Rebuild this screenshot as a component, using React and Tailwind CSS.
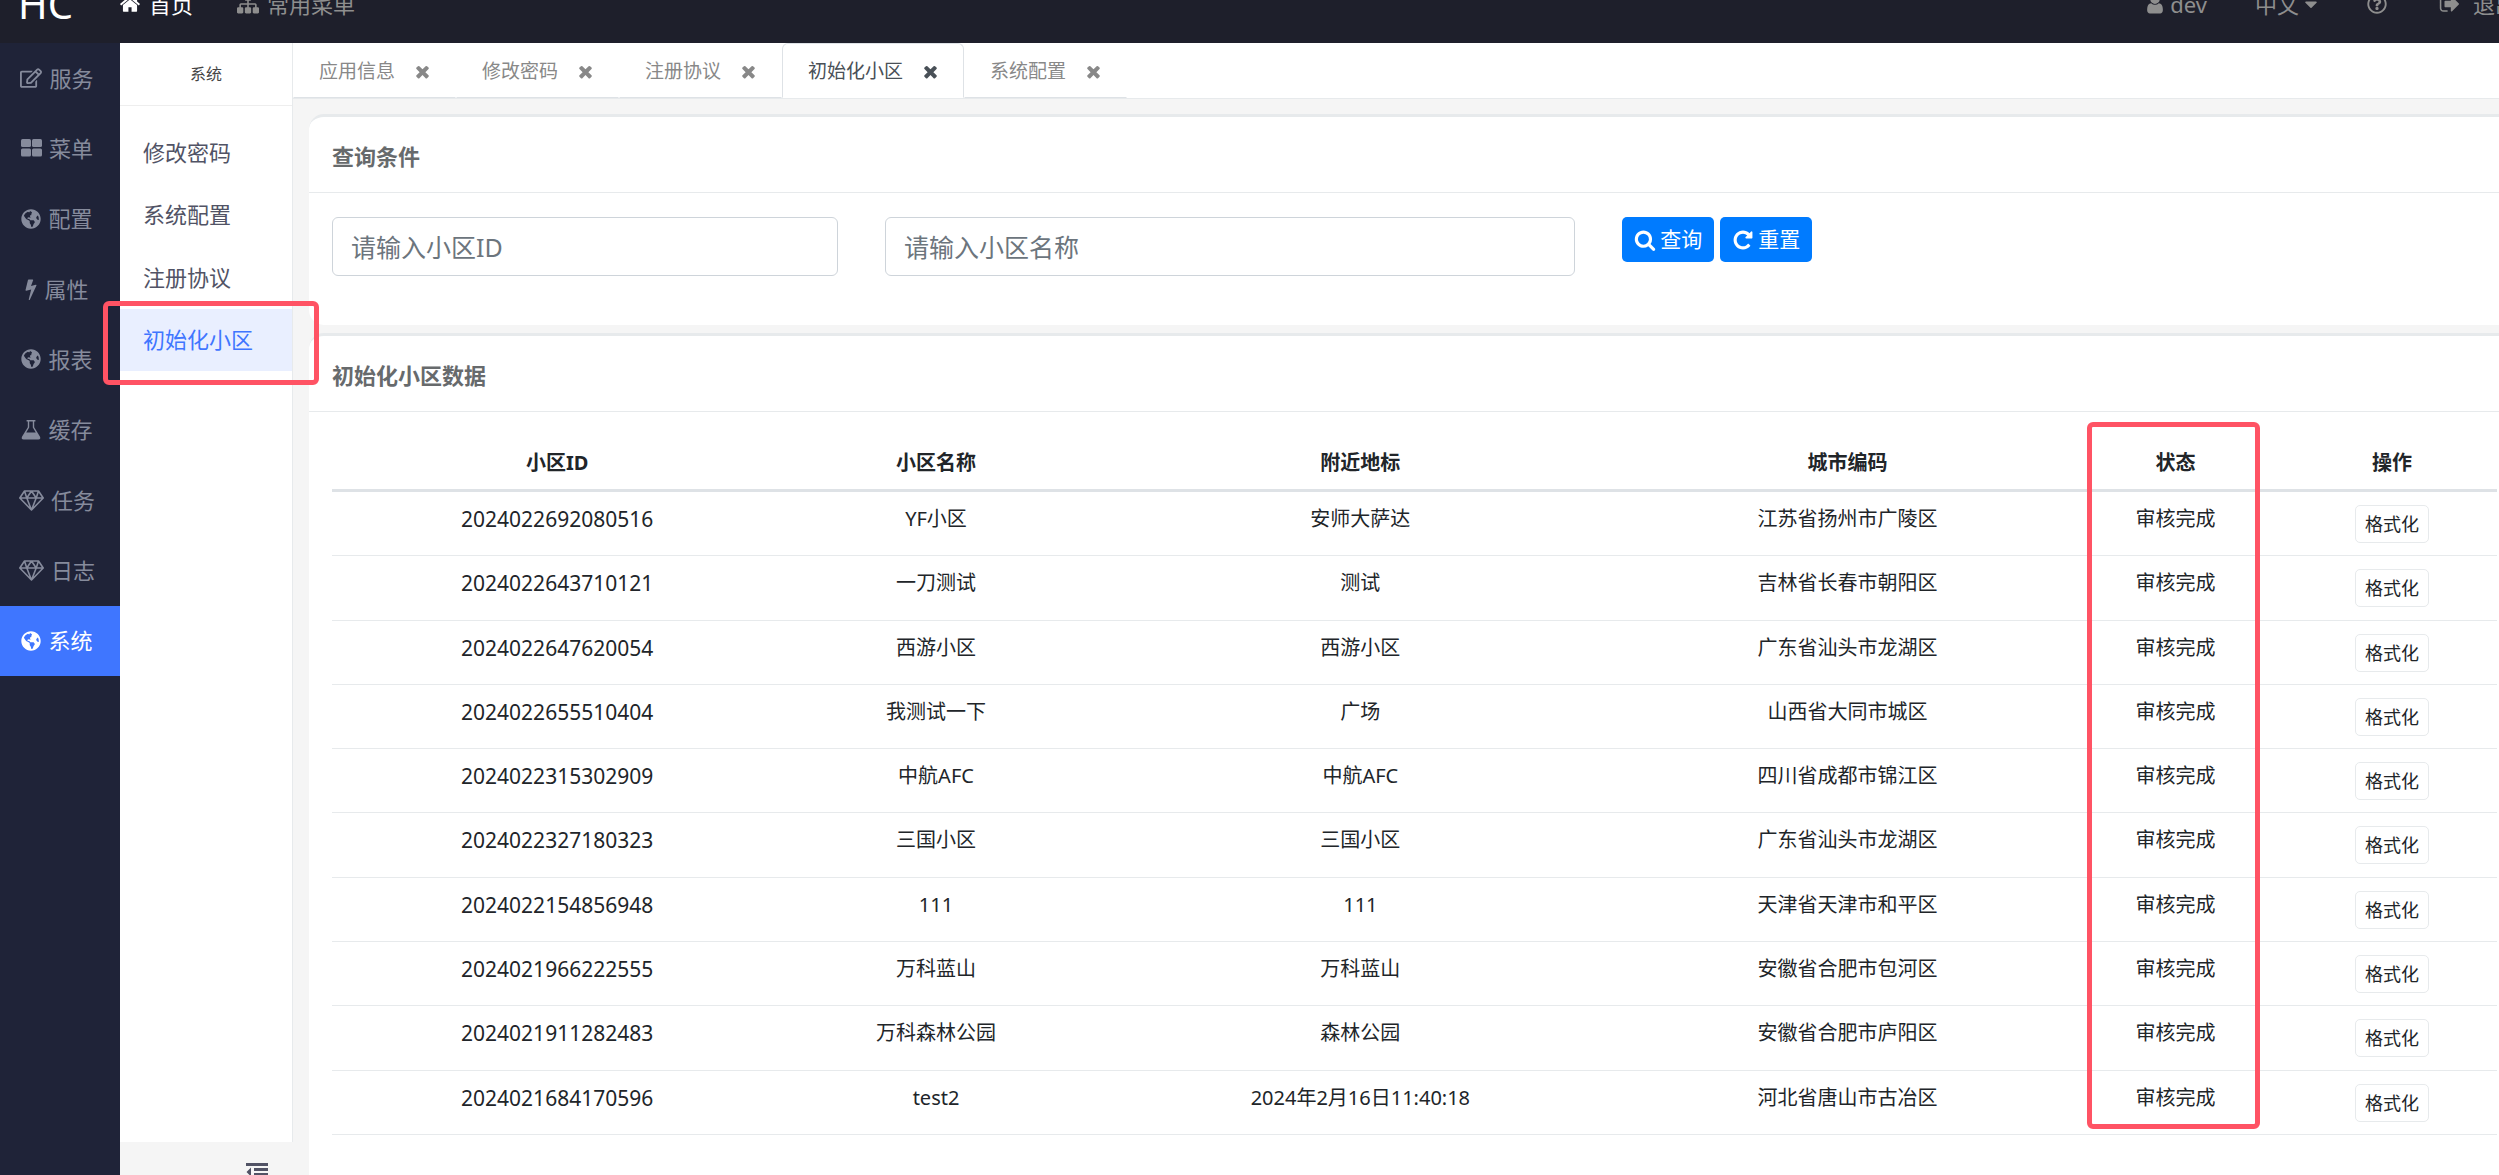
import React, { useState } from 'react';
import { FaRegEdit, FaGlobeAmericas, FaRegQuestionCircle, FaCaretDown } from 'react-icons/fa';

// Solid glyphs drawn on a 1792 unit em square
const glyphs = {
     home: 'M1472 992v480q0 26-19 45t-45 19h-384v-384h-256v384h-384q-26 0-45-19t-19-45v-480q0-1 .5-3t.5-3l575-474 575 474q1 2 1 6zm223-69l-62 74q-8 9-21 11h-3q-13 0-21-7l-692-577-692 577q-12 8-24 7-13-2-21-11l-62-74q-8-10-7-23.5t11-21.5l719-599q32-26 76-26t76 26l244 204v-195q0-14 9-23t23-9h192q14 0 23 9t9 23v408l219 182q10 8 11 21.5t-7 23.5z',
     sitemap: 'M1792 1248v320q0 40-28 68t-68 28h-320q-40 0-68-28t-28-68v-320q0-40 28-68t68-28h96v-192h-512v192h96q40 0 68 28t28 68v320q0 40-28 68t-68 28h-320q-40 0-68-28t-28-68v-320q0-40 28-68t68-28h96v-192h-512v192h96q40 0 68 28t28 68v320q0 40-28 68t-68 28h-320q-40 0-68-28t-28-68v-320q0-40 28-68t68-28h96v-192q0-52 38-90t90-38h512v-192h-96q-40 0-68-28t-28-68v-320q0-40 28-68t68-28h320q40 0 68 28t28 68v320q0 40-28 68t-68 28h-96v192h512q52 0 90 38t38 90v192h96q40 0 68 28t28 68z',
     user: 'M1536 1399q0 109-62.5 187t-150.5 78h-854q-88 0-150.5-78t-62.5-187q0-85 8.5-160.5t31.5-152 58.5-131 94-89 134.5-34.5q131 128 313 128t313-128q76 0 134.5 34.5t94 89 58.5 131 31.5 152 8.5 160.5zm-256-887q0 159-112.5 271.5t-271.5 112.5-271.5-112.5-112.5-271.5 112.5-271.5 271.5-112.5 271.5 112.5 112.5 271.5z',
     signOut: 'M704 1440q0 4 1 20t.5 26.5-3 23.5-10 19.5-20.5 6.5h-320q-119 0-203.5-84.5t-84.5-203.5v-704q0-119 84.5-203.5t203.5-84.5h320q13 0 22.5 9.5t9.5 22.5q0 4 1 20t.5 26.5-3 23.5-10 19.5-20.5 6.5h-320q-66 0-113 47t-47 113v704q0 66 47 113t113 47h312l11.5 1 11.5 3 8 5.5 7 9 2 13.5zm928-544q0 26-19 45l-544 544q-19 19-45 19t-45-19-19-45v-288h-448q-26 0-45-19t-19-45v-384q0-26 19-45t45-19h448v-288q0-26 19-45t45-19 45 19l544 544q19 19 19 45z',
     times: 'M1490 1322q0 40-28 68l-136 136q-28 28-68 28t-68-28l-294-294-294 294q-28 28-68 28t-68-28l-136-136q-28-28-28-68t28-68l294-294-294-294q-28-28-28-68t28-68l136-136q28-28 68-28t68 28l294 294 294-294q28-28 68-28t68 28l136 136q28 28 28 68t-28 68l-294 294 294 294q28 28 28 68z',
     search: 'M1216 832q0-185-131.5-316.5t-316.5-131.5-316.5 131.5-131.5 316.5 131.5 316.5 316.5 131.5 316.5-131.5 131.5-316.5zm512 832q0 52-38 90t-90 38q-54 0-90-38l-343-342q-179 124-399 124-143 0-273.5-55.5t-225-150-150-225-55.5-273.5 55.5-273.5 150-225 225-150 273.5-55.5 273.5 55.5 225 150 150 225 55.5 273.5q0 220-124 399l343 343q37 37 37 90z',
     repeat: 'M1664 256v448q0 26-19 45t-45 19h-448q-42 0-59-40-17-39 14-69l138-138q-148-137-349-137-104 0-198.5 40.5t-163.5 109.5-109.5 163.5-40.5 198.5 40.5 198.5 109.5 163.5 163.5 109.5 198.5 40.5q119 0 225-52t179-147q7-10 23-12 15 0 25 9l137 138q9 8 9.5 20.5t-7.5 22.5q-109 132-264 204.5t-327 72.5q-156 0-298-61t-245-164-164-245-61-298 61-298 164-245 245-164 298-61q147 0 284.5 55.5t244.5 156.5l130-129q29-31 70-14 39 17 39 59z',
     bolt: 'M1333 566q18 20 7 44l-540 1157q-13 25-42 25-4 0-14-2-17-5-25.5-19t-4.5-30l197-808-406 101q-4 1-12 1-18 0-31-11-18-15-13-39l201-825q4-16 18-26.5t32-10.5h328q19 0 32 12.5t13 29.5q0 8-5 18l-171 463 396-98q8-2 12-2 19 0 34 15z'
};

const Glyph = ({ name, className }) => (
     <svg viewBox="0 0 1792 1792" fill="currentColor" className={className} aria-hidden="true">
          <path d={glyphs[name]} />
     </svg>
);

const ThLarge = () => (
     <svg viewBox="0 0 21 18" fill="currentColor" className="w-[21px] h-[18px]" aria-hidden="true">
          <rect x="0" y="0" width="10" height="8" rx="1.5" />
          <rect x="11" y="0" width="10" height="8" rx="1.5" />
          <rect x="0" y="9.5" width="10" height="8" rx="1.5" />
          <rect x="11" y="9.5" width="10" height="8" rx="1.5" />
     </svg>
);

const Flask = () => (
     <svg viewBox="0 0 20 20" fill="currentColor" className="w-5 h-5" aria-hidden="true">
          <path d="M5.6 0h8.8v1.4h-1.2v5.8l5.7 9.2c.9 1.6.3 3.1-1.5 3.1H2.6c-1.8 0-2.4-1.5-1.5-3.1l5.7-9.2V1.4H5.6zM8.200 1.400v6.200L5.200 12.500h9.600L11.800 7.600V1.400z" fillRule="evenodd" />
     </svg>
);

const Diamond = () => (
     <svg viewBox="0 0 25 21" fill="none" stroke="currentColor" strokeWidth="1.6" strokeLinejoin="round" className="w-[25px] h-[21px]" aria-hidden="true">
          <path d="M5.5 1h14l4.700 7L12.500 20 .8 8zM.8 8h23.400M12.500 1L7.800 8l4.700 12 4.700-12zM5.500 1l2.300 7M19.500 1l-2.300 7" />
     </svg>
);

const Outdent = () => (
     <svg viewBox="0 0 22 18" fill="currentColor" className="w-[22px] h-[18px]" aria-hidden="true">
          <path d="M0 0h22v3H0zM8 5h14v3H8zM8 10h14v3H8zM0 15h22v3H0zM5 4.500v9L.5 9z" />
     </svg>
);

const sideMenus = [
     { name: '服务', icon: <FaRegEdit className="w-[22px] h-5" /> },
     { name: '菜单', icon: <ThLarge /> },
     { name: '配置', icon: <FaGlobeAmericas className="w-5 h-5" /> },
     { name: '属性', icon: <Glyph name="bolt" className="w-[22px] h-[22px] -mx-[5px]" /> },
     { name: '报表', icon: <FaGlobeAmericas className="w-5 h-5" /> },
     { name: '缓存', icon: <Flask /> },
     { name: '任务', icon: <Diamond /> },
     { name: '日志', icon: <Diamond /> },
     { name: '系统', icon: <FaGlobeAmericas className="w-5 h-5" /> }
];

const subMenus = ['修改密码', '系统配置', '注册协议', '初始化小区'];

const tabs = ['应用信息', '修改密码', '注册协议', '初始化小区', '系统配置'];

const communities = [
     { id: '2024022692080516', name: 'YF小区', landmark: '安师大萨达', city: '江苏省扬州市广陵区' },
     { id: '2024022643710121', name: '一刀测试', landmark: '测试', city: '吉林省长春市朝阳区' },
     { id: '2024022647620054', name: '西游小区', landmark: '西游小区', city: '广东省汕头市龙湖区' },
     { id: '2024022655510404', name: '我测试一下', landmark: '广场', city: '山西省大同市城区' },
     { id: '2024022315302909', name: '中航AFC', landmark: '中航AFC', city: '四川省成都市锦江区' },
     { id: '2024022327180323', name: '三国小区', landmark: '三国小区', city: '广东省汕头市龙湖区' },
     { id: '2024022154856948', name: '111', landmark: '111', city: '天津省天津市和平区' },
     { id: '2024021966222555', name: '万科蓝山', landmark: '万科蓝山', city: '安徽省合肥市包河区' },
     { id: '2024021911282483', name: '万科森林公园', landmark: '森林公园', city: '安徽省合肥市庐阳区' },
     { id: '2024021684170596', name: 'test2', landmark: '2024年2月16日11:40:18', city: '河北省唐山市古冶区' }
];

const Header = () => (
     <header className="flex items-center shrink-0 h-[78px] -mt-[35px] pl-[18px] bg-[#1e1f2b] text-[22px] text-[#8e8e8e] whitespace-nowrap">
          <div className="w-[101px] text-[40px] text-white">HC</div>
          <nav className="flex items-center gap-12">
               <a href="#" className="flex items-center gap-2 text-white">
                    <Glyph name="home" className="w-[22px] h-[22px]" />
                    首页
               </a>
               <a href="#" className="flex items-center gap-2 -ml-1">
                    <Glyph name="sitemap" className="w-[22px] h-[22px]" />
                    常用菜单
               </a>
          </nav>
          <nav className="flex items-center gap-12 ml-auto -mr-[18px]">
               <a href="#" className="flex items-center gap-1">
                    <Glyph name="user" className="w-[22px] h-[22px]" />
                    dev
               </a>
               <a href="#" className="flex items-center gap-1">
                    中文
                    <FaCaretDown className="w-4 h-5" />
               </a>
               <a href="#" aria-label="帮助">
                    <FaRegQuestionCircle className="w-5 h-5" />
               </a>
               <a href="#" className="flex items-center gap-3 pl-1">
                    <Glyph name="signOut" className="w-[22px] h-[22px]" />
                    退出
               </a>
          </nav>
     </header>
);

const Card = ({ title, className, children }) => (
     <section className={`rounded-t-[15px] border-t-[3px] border-[#e7eaec] bg-white ${className}`}>
          <div className="flex items-center h-[76px] pt-[3px] px-[23px] border-b border-[#e7eaec]">
               <h5 className="text-[22px] font-bold text-[#676a6c]">{title}</h5>
          </div>
          {children}
     </section>
);

const App = () => {
     const [currentMenu, setCurrentMenu] = useState('系统');
     const [currentSub, setCurrentSub] = useState('初始化小区');
     const [currentTab, setCurrentTab] = useState('初始化小区');
     const [communityId, setCommunityId] = useState('');
     const [communityName, setCommunityName] = useState('');

     const resetConditions = () => {
          setCommunityId('');
          setCommunityName('');
     };

     return (
          <div className="relative flex flex-col h-screen overflow-hidden bg-[#f5f5f5] font-['Noto_Sans','Noto_Sans_CJK_SC',sans-serif] text-[#212529]">
               <Header />
               <div className="flex flex-1 min-h-0">
                    <aside className="w-[120px] shrink-0 bg-[#1f2338]">
                         <ul className="grid grid-rows-9 h-[633px]">
                              {sideMenus.map((menu) => (
                                   <li key={menu.name}>
                                        <button
                                             onClick={() => setCurrentMenu(menu.name)}
                                             className={`flex items-center justify-center gap-[7px] w-full h-full pr-[6px] text-[22px] ${menu.name === currentMenu ? 'bg-[#3f76ff] text-white' : 'text-[#868b9c]'}`}
                                        >
                                             {menu.icon}
                                             {menu.name}
                                        </button>
                                   </li>
                              ))}
                         </ul>
                    </aside>

                    <aside className="flex flex-col w-[173px] shrink-0">
                         <div className="flex flex-col flex-1 bg-white border-r border-[#e7eaec]">
                              <div className="flex items-center justify-center h-[63px] border-b border-[#eeeeee] text-base text-[#444444]">系统</div>
                              <ul className="grid grid-rows-4 h-[250px] mt-[15px]">
                                   {subMenus.map((name) => (
                                        <li key={name}>
                                             <button
                                                  onClick={() => setCurrentSub(name)}
                                                  className={`w-full h-full pl-[23px] text-left text-[22px] ${name === currentSub ? 'bg-[#e9efff] text-[#3f76ff]' : 'text-[#515365]'}`}
                                             >
                                                  {name}
                                             </button>
                                        </li>
                                   ))}
                              </ul>
                         </div>
                         <button aria-label="收起" className="flex justify-end h-[33px] pt-[21px] pr-[25px] overflow-hidden text-[#515365]">
                              <Outdent />
                         </button>
                    </aside>

                    <main className="flex flex-col flex-1 min-w-0">
                         <ul className="flex shrink-0 h-14 bg-white border-b border-[#e7eaec]">
                              {tabs.map((tab) => (
                                   <li
                                        key={tab}
                                        className={`flex items-center gap-5 h-[55px] pt-[2px] px-[25px] border text-[19px] ${tab === currentTab ? 'rounded-t-md border-[#dee2e6] border-b-white text-[#495057]' : 'border-transparent border-b-[#dee2e6] text-[#888888]'}`}
                                   >
                                        <a href="#" onClick={() => setCurrentTab(tab)}>{tab}</a>
                                        <button aria-label="关闭" className="flex justify-center w-[15px]">
                                             <Glyph name="times" className="w-[19px] h-[19px] shrink-0" />
                                        </button>
                                   </li>
                              ))}
                         </ul>

                         <div className="flex flex-col flex-1 gap-2 pt-[15px] pl-4 -mr-[21px]">
                              <Card title="查询条件" className="shrink-0 rounded-b-[15px]">
                                   <div className="grid grid-cols-12 items-start gap-x-[47px] px-[23px] pt-6 pb-[49px]">
                                        <input
                                             type="text"
                                             value={communityId}
                                             onChange={(e) => setCommunityId(e.target.value)}
                                             aria-label="小区ID"
                                             placeholder="请输入小区ID"
                                             className="col-span-3 h-[59px] px-[18px] border border-[#ced4da] rounded-md text-[25px] placeholder:text-[#6c757d]"
                                        />
                                        <input
                                             type="text"
                                             value={communityName}
                                             onChange={(e) => setCommunityName(e.target.value)}
                                             aria-label="小区名称"
                                             placeholder="请输入小区名称"
                                             className="col-span-4 h-[59px] px-[18px] border border-[#ced4da] rounded-md text-[25px] placeholder:text-[#6c757d]"
                                        />
                                        <div className="col-span-4 flex gap-[6px]">
                                             <button className="flex items-center gap-1 h-[45px] px-3 rounded-[5px] bg-[#007bff] text-[21px] text-white">
                                                  <Glyph name="search" className="w-[22px] h-[22px]" />
                                                  查询
                                             </button>
                                             <button onClick={resetConditions} className="flex items-center gap-1 h-[45px] px-3 rounded-[5px] bg-[#007bff] text-[21px] text-white">
                                                  <Glyph name="repeat" className="w-[22px] h-[22px]" />
                                                  重置
                                             </button>
                                        </div>
                                   </div>
                              </Card>

                              <Card title="初始化小区数据" className="flex-1">
                                   <div className="px-[23px] pt-6">
                                        <table className="w-full h-[699px] table-fixed border-separate border-spacing-0 text-center text-[20px] leading-[30px]">
                                             <thead className="[&_th]:border-b-[3px] [&_th]:border-[#dee2e6]">
                                                  <tr className="h-14">
                                                       <th className="w-[20.8%]">小区ID</th>
                                                       <th className="w-[14.2%]">小区名称</th>
                                                       <th className="w-[25%]">附近地标</th>
                                                       <th className="w-[20%]">城市编码</th>
                                                       <th className="w-[10.3%]">状态</th>
                                                       <th>操作</th>
                                                  </tr>
                                             </thead>
                                             <tbody className="[&_td]:border-b [&_td]:border-[#e7eaec]">
                                                  {communities.map((item) => (
                                                       <tr key={item.id} className="align-top">
                                                            <td className="pt-3 text-[21px]">{item.id}</td>
                                                            <td className="pt-3">{item.name}</td>
                                                            <td className="pt-3">{item.landmark}</td>
                                                            <td className="pt-3">{item.city}</td>
                                                            <td className="pt-3">审核完成</td>
                                                            <td className="pt-[13px] pb-3">
                                                                 <button className="block mx-auto h-[38px] px-[9px] border border-[#e7eaec] rounded-[5px] text-[18px]">
                                                                      格式化
                                                                 </button>
                                                            </td>
                                                       </tr>
                                                  ))}
                                             </tbody>
                                        </table>
                                   </div>
                              </Card>
                         </div>
                    </main>
               </div>

               {/* highlight frames over the active menu and the status column */}
               <div className="absolute left-[103px] top-[301px] w-[216px] h-[84px] border-[5px] border-[#ff5364] rounded-md pointer-events-none" />
               <div className="absolute left-[2087px] top-[422px] w-[173px] h-[707px] border-[5px] border-[#ff5364] rounded-md pointer-events-none" />
          </div>
     );
};

export default App;
